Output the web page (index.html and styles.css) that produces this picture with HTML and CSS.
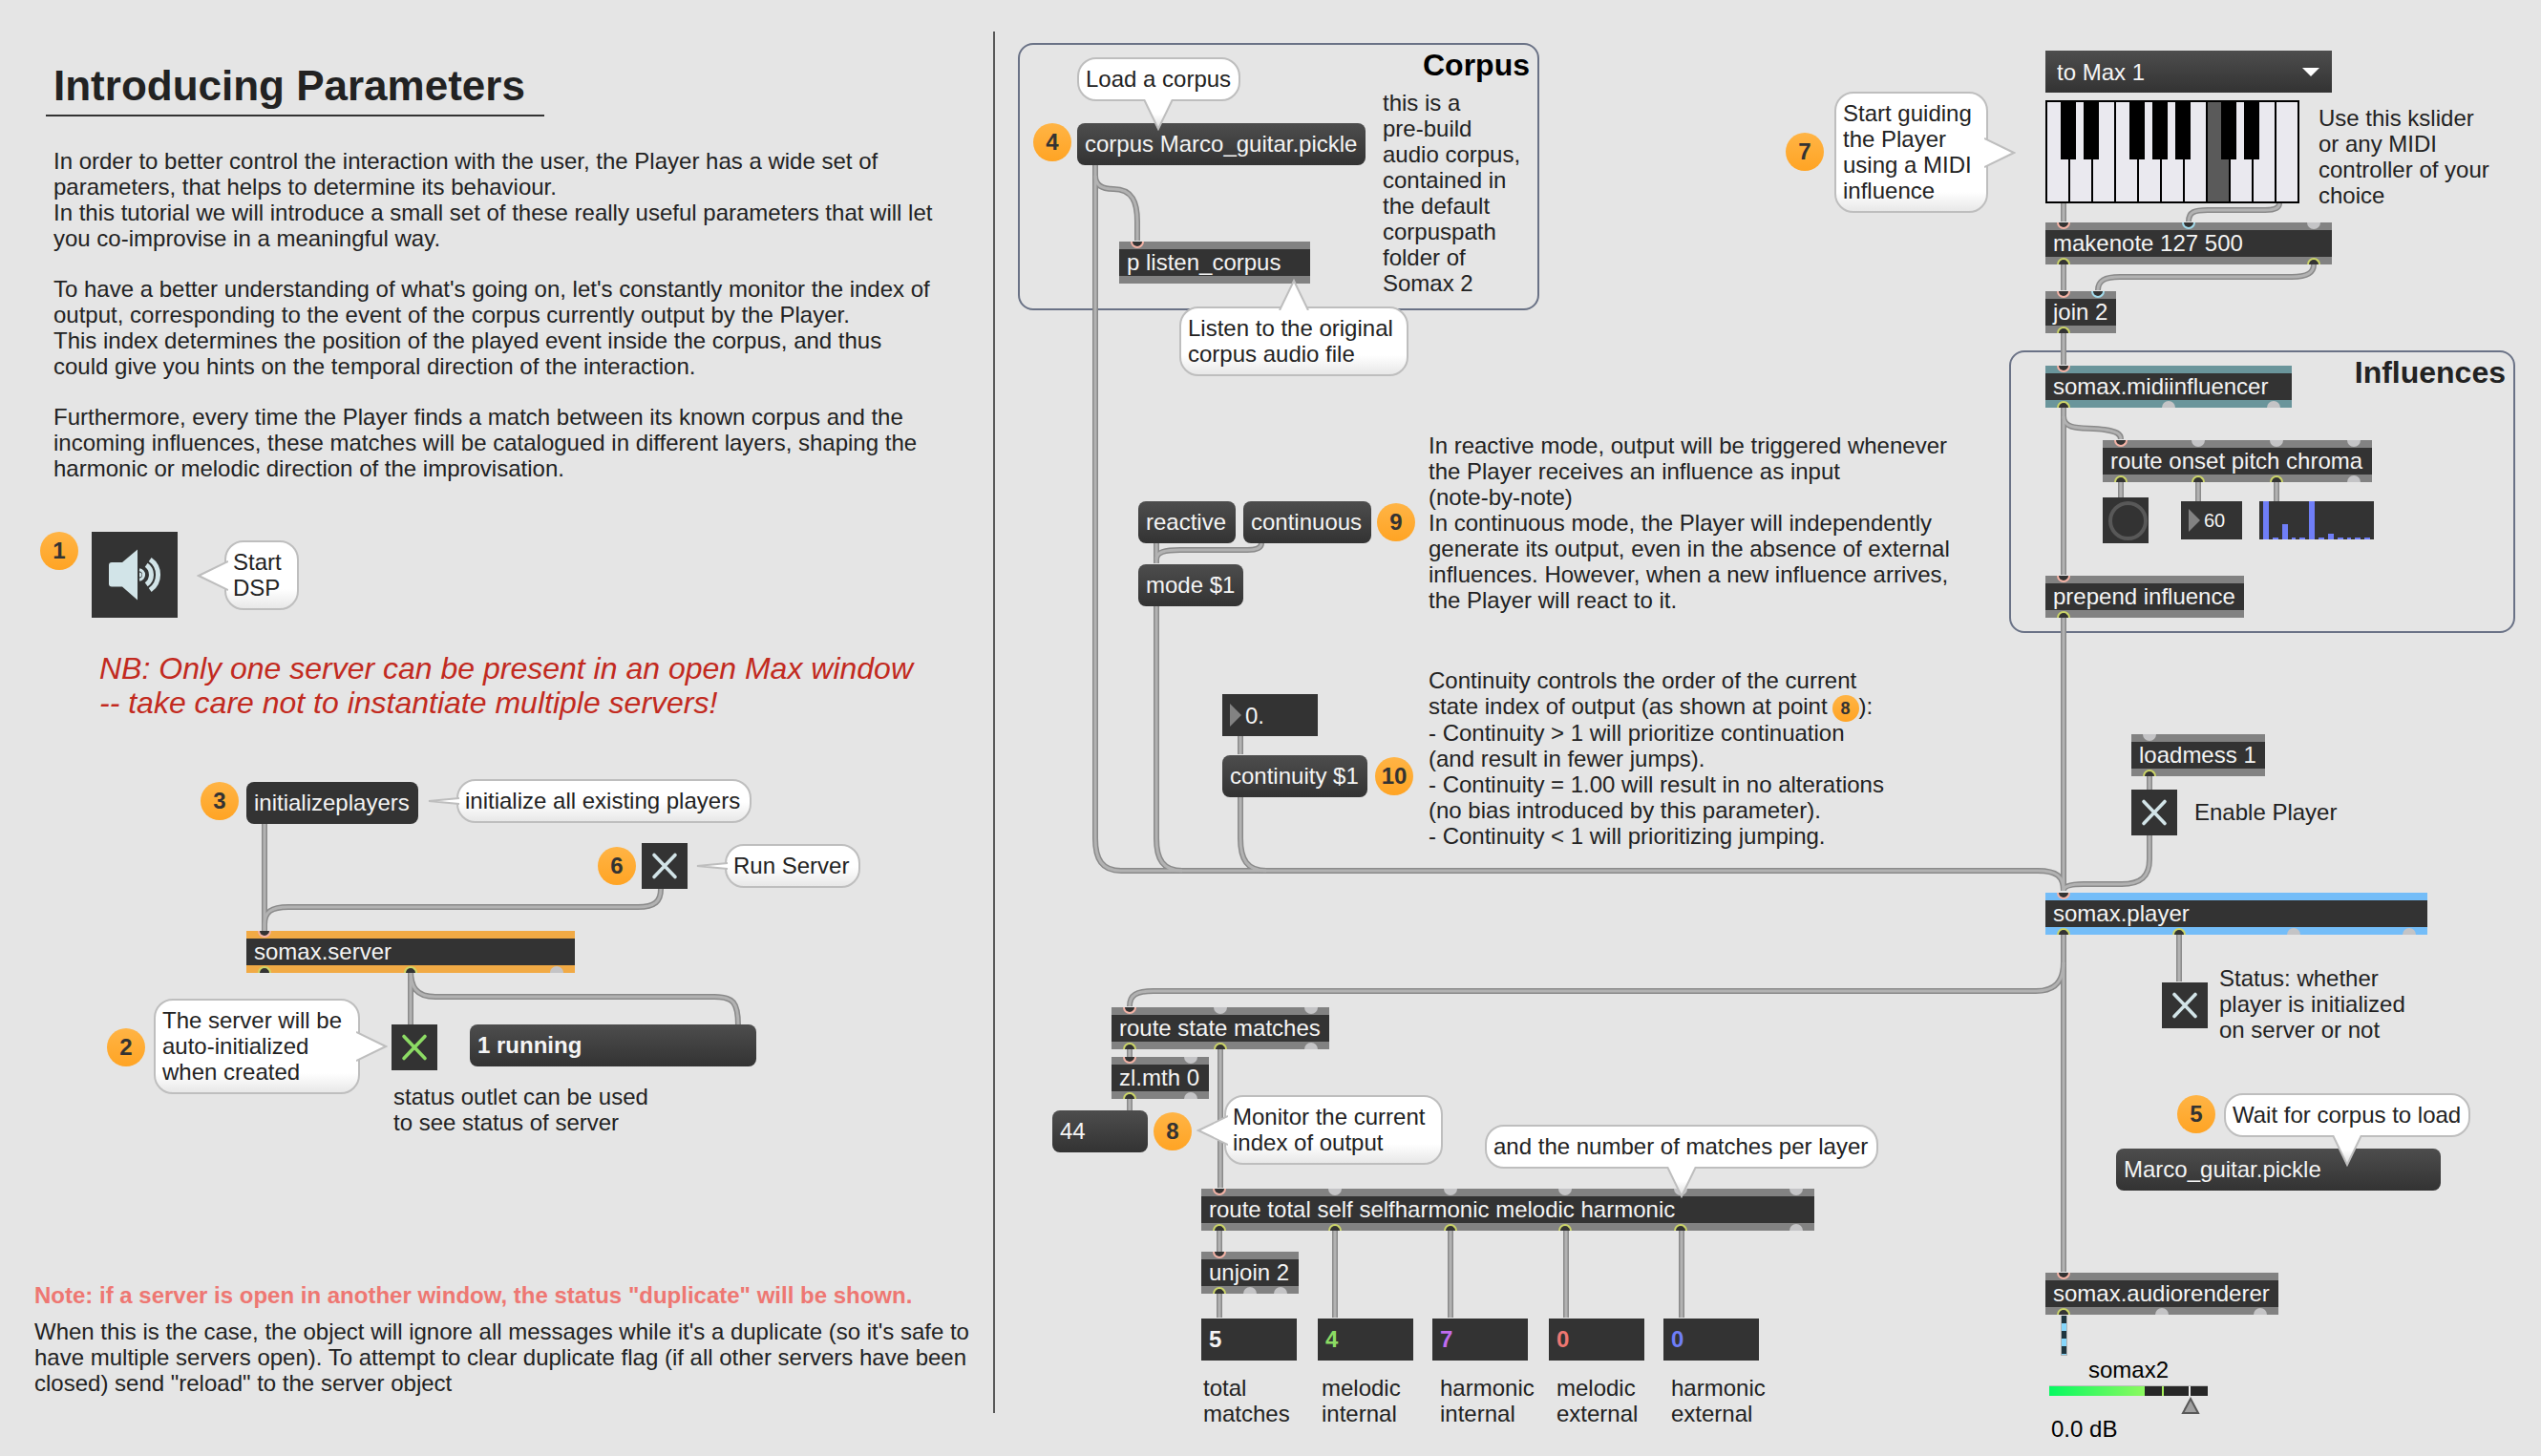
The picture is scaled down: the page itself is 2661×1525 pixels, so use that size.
FILE: index.html
```html
<!DOCTYPE html>
<html lang="en">
<head>
<meta charset="utf-8">
<title>Introducing Parameters</title>
<link rel="stylesheet" href="styles.css">
</head>
<body>
<svg class="defs" width="0" height="0" aria-hidden="true">
  <defs>
    <linearGradient id="tail-shade" x1="0" y1="0" x2="0" y2="1"><stop offset="0.5" stop-color="#fff"/><stop offset="1" stop-color="#dcdcdc"/></linearGradient>
    <symbol id="cross" viewBox="0 0 48 48"><path d="M13 12.5 35 35.5M35 12.5 13 35.5" fill="none" stroke="currentColor" stroke-width="3.6" stroke-linecap="round"/></symbol>
    <symbol id="arrow" viewBox="0 0 12 24"><path d="M0 0 12 12 0 24Z" fill="#828282"/></symbol>
    <symbol id="tail-left" viewBox="0 0 33 32"><path d="M33 1 2 16 33 31" fill="#fff" stroke="#bebebe" stroke-width="2"/></symbol>
    <symbol id="tail-right" viewBox="0 0 33 32"><path d="M0 1 31 16 0 31" fill="#fff" stroke="#bebebe" stroke-width="2"/></symbol>
    <symbol id="tail-down" viewBox="0 0 32 33"><path d="M1 0 16 31 31 0" fill="url(#tail-shade)" stroke="#bebebe" stroke-width="2"/></symbol>
    <symbol id="tail-up" viewBox="0 0 32 33"><path d="M1 33 16 2 31 33" fill="#fff" stroke="#bebebe" stroke-width="2"/></symbol>
    <symbol id="tail-thin" viewBox="0 0 33 8"><path d="M33 1 1 4 33 7" fill="#fff" stroke="#bebebe" stroke-width="2"/></symbol>
  </defs>
</svg>

<main class="patcher">
  <section class="guide">
    <header><h1>Introducing Parameters</h1></header>
    <div class="intro">
      <p>In order to better control the interaction with the user, the Player has a wide set of<br>parameters, that helps to determine its behaviour.<br>In this tutorial we will introduce a small set of these really useful parameters that will let<br>you co-improvise in a meaningful way.</p>
      <p>To have a better understanding of what's going on, let's constantly monitor the index of<br>output, corresponding to the event of the corpus currently output by the Player.<br>This index determines the position of the played event inside the corpus, and thus<br>could give you hints on the temporal direction of the interaction.</p>
      <p>Furthermore, every time the Player finds a match between its known corpus and the<br>incoming influences, these matches will be catalogued in different layers, shaping the<br>harmonic or melodic direction of the improvisation.</p>
    </div>

    <div class="canvas canvas-server">
      <svg class="wires" width="1040" height="839" viewBox="0 504 1040 839" aria-hidden="true">
        <g id="server-wires">
          <path d="M277 863V980"/>
          <path d="M692 931C692 944 686 950 668 950H302C284 950 277 955 277 968V980"/>
          <path d="M430 1016V1074"/>
          <path d="M430 1016C430 1034 436 1044 456 1044H748C768 1044 773 1050 773 1074"/>
        </g>
        <use class="wire-core" href="#server-wires"/>
      </svg>

      <span class="badge b1">1</span>
      <button class="dsp" type="button" aria-label="Start DSP">
        <svg width="90" height="90" viewBox="0 0 90 90">
          <path d="M21 32H32L48 18.5V71.5L32 57.5H21Q18 57.5 18 54.5V35Q18 32 21 32Z" fill="#d2e4e8"/>
          <g fill="none" stroke="#d2e4e8">
            <path d="M61.2 29A19.5 19.5 0 0 1 61.2 61" stroke-width="5"/>
            <path d="M57.2 34.8A12.5 12.5 0 0 1 57.2 55.2" stroke-width="5"/>
            <path d="M50 39.8A5.3 5.3 0 0 1 50 50.3" stroke-width="3"/>
          </g>
          <path d="M50 42.5A2.5 2.5 0 0 1 50 47.5Z" fill="#d2e4e8"/>
        </svg>
      </button>
      <div class="bubble bub-dsp">Start<br>DSP<svg class="tail tl"><use href="#tail-left"/></svg></div>

      <p class="warning">NB: Only one server can be present in an open Max window<br>-- take care not to instantiate multiple servers!</p>

      <span class="badge b3">3</span>
      <button type="button" class="message pressed m-init">initializeplayers</button>
      <div class="bubble bub-init">initialize all existing players<svg class="tail tt"><use href="#tail-thin"/></svg></div>

      <span class="badge b6">6</span>
      <label class="toggle t-run"><input type="checkbox" checked aria-label="Run Server"><svg><use href="#cross"/></svg></label>
      <div class="bubble bub-run">Run Server<svg class="tail tt"><use href="#tail-thin"/></svg></div>

      <div class="obj orange o-server">
        <div class="ports in"><i class="on"></i></div>
        <div class="name">somax.server</div>
        <div class="ports out"><i class="on"></i><i class="on"></i><i></i></div>
      </div>

      <span class="badge b2">2</span>
      <div class="bubble bub-auto">The server will be<br>auto-initialized<br>when created<svg class="tail tr"><use href="#tail-right"/></svg></div>
      <label class="toggle green t-server"><input type="checkbox" checked aria-label="Server status"><svg><use href="#cross"/></svg></label>
      <button type="button" class="message strong m-running">1 running</button>
      <p class="comment c-status">status outlet can be used<br>to see status of server</p>
    </div>

    <footer>
      <p class="note">Note: if a server is open in another window, the status "duplicate" will be shown.</p>
      <p>When this is the case, the object will ignore all messages while it's a duplicate (so it's safe to<br>have multiple servers open). To attempt to clear duplicate flag (if all other servers have been<br>closed) send "reload" to the server object</p>
    </footer>
  </section>

  <section class="canvas canvas-player">
    <section class="panel p-corpus">
      <h2 class="black">Corpus</h2>
      <p>this is a<br>pre-build<br>audio corpus,<br>contained in<br>the default<br>corpuspath<br>folder of<br>Somax 2</p>
    </section>
    <section class="panel p-influences"><h2>Influences</h2></section>

    <svg class="wires" width="1619" height="1525" viewBox="1042 0 1619 1525" aria-hidden="true">
      <g id="player-wires">
        <path d="M1147 173V878C1147 900 1154 912 1174 912H2134C2154 912 2161 918 2161 933"/>
        <path d="M1147 184C1147 194 1154 198 1166 198C1186 198 1191 212 1191 232V252"/>
        <path d="M1211 569V590"/>
        <path d="M1321 569C1321 574 1316 576 1306 576H1236C1220 576 1211 578 1211 586"/>
        <path d="M1211 635V878C1211 900 1218 912 1238 912"/>
        <path d="M1299 771V790"/>
        <path d="M1299 835V878C1299 900 1306 912 1326 912"/>
        <path d="M2161 213V232"/>
        <path d="M2387 213C2387 218 2382 220 2372 220H2312C2298 220 2292 222 2292 232"/>
        <path d="M2161 277V304"/>
        <path d="M2423 277C2423 286 2416 290 2400 290H2220C2204 290 2197 294 2197 304"/>
        <path d="M2161 349V382"/>
        <path d="M2161 427V602"/>
        <path d="M2161 436C2161 452 2184 447 2204 450C2216 452 2221 454 2221 460"/>
        <path d="M2221 505V521M2302 505V525M2384 505V525"/>
        <path d="M2161 647V933"/>
        <path d="M2251 813V827"/>
        <path d="M2251 875V900C2251 918 2242 926 2222 926H2182C2168 926 2161 928 2161 933"/>
        <path d="M2161 979V1332"/>
        <path d="M2161 1008C2161 1028 2152 1038 2132 1038H1208C1190 1038 1183 1042 1183 1054"/>
        <path d="M2282 979V1028"/>
        <path d="M1183 1099V1107M1183 1151V1163M1278 1099V1244"/>
        <path d="M1277 1289V1311M1277 1355V1380"/>
        <path d="M1398 1289V1380M1519 1289V1380M1640 1289V1380M1761 1289V1380"/>
      </g>
      <use class="wire-core" href="#player-wires"/>
      <path class="signal-edge" d="M2161.5 1378V1420"/>
      <path class="signal" d="M2161.5 1378V1419"/>
      <path class="signal-dash" d="M2161.5 1386V1419"/>
    </svg>

    <span class="badge b4">4</span>
    <button type="button" class="message m-corpus">corpus Marco_guitar.pickle</button>
    <div class="bubble plain bub-load">Load a corpus<svg class="tail td"><use href="#tail-down"/></svg></div>
    <div class="obj o-listen">
      <div class="ports in"><i class="on"></i></div>
      <div class="name">p listen_corpus</div>
      <div class="ports out"></div>
    </div>
    <div class="bubble bub-listen">Listen to the original<br>corpus audio file<svg class="tail tu"><use href="#tail-up"/></svg></div>

    <button type="button" class="message m-reactive">reactive</button>
    <button type="button" class="message m-continuous">continuous</button>
    <span class="badge b9">9</span>
    <button type="button" class="message m-mode">mode $1</button>
    <p class="comment c-mode">In reactive mode, output will be triggered whenever<br>the Player receives an influence as input<br>(note-by-note)<br>In continuous mode, the Player will independently<br>generate its output, even in the absence of external<br>influences. However, when a new influence arrives,<br>the Player will react to it.</p>

    <div class="number n-continuity"><svg><use href="#arrow"/></svg><input type="text" value="0." aria-label="Continuity"></div>
    <button type="button" class="message m-continuity">continuity $1</button>
    <span class="badge b10">10</span>
    <p class="comment c-continuity">Continuity controls the order of the current<br>state index of output (as shown at point<span class="badge small">8</span>):<br>- Continuity &gt; 1 will prioritize continuation<br>(and result in fewer jumps).<br>- Continuity = 1.00 will result in no alterations<br>(no bias introduced by this parameter).<br>- Continuity &lt; 1 will prioritizing jumping.</p>

    <span class="badge b7">7</span>
    <div class="bubble bub-guide">Start guiding<br>the Player<br>using a MIDI<br>influence<svg class="tail tr"><use href="#tail-right"/></svg></div>
    <div class="menu">
      <select aria-label="MIDI source"><option>to Max 1</option></select>
      <svg width="18" height="9" viewBox="0 0 18 9"><path d="M0 0H18L9 9Z" fill="#fff"/></svg>
    </div>
    <svg class="keyboard" width="266" height="108" viewBox="0 0 266 108" role="img" aria-label="Keyboard">
      <path d="M0 0H266V108H0Z" fill="#000"/>
      <path d="M2 2h22v104h-22zM26 2h22v104h-22zM50 2h22v104h-22zM74 2h22v104h-22zM98 2h22v104h-22zM122 2h22v104h-22zM146 2h22v104h-22zM194 2h22v104h-22zM218 2h22v104h-22zM242 2h22v104h-22z" fill="#eae9ef"/>
      <path d="M170 2h22v104h-22z" fill="#5a5a5a"/>
      <path d="M16 0h16v62h-16zM40 0h16v62h-16zM88 0h16v62h-16zM112 0h16v62h-16zM136 0h16v62h-16zM184 0h16v62h-16zM208 0h16v62h-16z" fill="#000"/>
    </svg>
    <p class="comment c-kslider">Use this kslider<br>or any MIDI<br>controller of your<br>choice</p>

    <div class="obj o-makenote">
      <div class="ports in"><i class="on"></i><i class="on cool"></i><i></i></div>
      <div class="name">makenote 127 500</div>
      <div class="ports out"><i class="on"></i><i class="on"></i></div>
    </div>
    <div class="obj o-join">
      <div class="ports in"><i class="on"></i><i class="on cool"></i></div>
      <div class="name">join 2</div>
      <div class="ports out"><i class="on"></i></div>
    </div>
    <div class="obj teal o-midi">
      <div class="ports in"><i class="on"></i></div>
      <div class="name">somax.midiinfluencer</div>
      <div class="ports out"><i class="on"></i><i></i><i></i></div>
    </div>
    <div class="obj o-onset">
      <div class="ports in"><i class="on"></i><i></i><i></i><i></i></div>
      <div class="name">route onset pitch chroma</div>
      <div class="ports out"><i class="on"></i><i class="on"></i><i class="on"></i><i></i></div>
    </div>
    <button type="button" class="bang" aria-label="Onset"></button>
    <div class="number compact n-pitch"><svg><use href="#arrow"/></svg><input type="text" value="60" aria-label="Pitch"></div>
    <svg class="chroma" width="120" height="40" viewBox="0 0 120 40" role="img" aria-label="Chroma">
      <path d="M0 0H120V40H0Z" fill="#333"/>
      <path d="M4 0h6v40h-6zM14 38h6v2h-6zM24 24h6v16h-6zM34 38h4v2h-4zM42 38h6v2h-6zM52 0h6v40h-6zM62 38h6v2h-6zM72 34h6v6h-6zM82 38h6v2h-6zM92 38h4v2h-4zM100 38h6v2h-6zM110 38h6v2h-6z" fill="#6f7ef7"/>
    </svg>
    <div class="obj o-prepend">
      <div class="ports in"><i class="on"></i></div>
      <div class="name">prepend influence</div>
      <div class="ports out"><i class="on"></i></div>
    </div>

    <div class="obj o-loadmess">
      <div class="ports in"><i></i></div>
      <div class="name">loadmess 1</div>
      <div class="ports out"><i class="on"></i></div>
    </div>
    <label class="toggle t-enable"><input type="checkbox" checked aria-labelledby="enable-text"><svg><use href="#cross"/></svg></label>
    <p class="comment c-enable" id="enable-text">Enable Player</p>
    <div class="obj blue o-player">
      <div class="ports in"><i class="on"></i></div>
      <div class="name">somax.player</div>
      <div class="ports out"><i class="on"></i><i class="on"></i><i></i><i></i></div>
    </div>
    <label class="toggle t-player"><input type="checkbox" checked aria-labelledby="player-text"><svg><use href="#cross"/></svg></label>
    <p class="comment c-player" id="player-text">Status: whether<br>player is initialized<br>on server or not</p>

    <span class="badge b5">5</span>
    <button type="button" class="message m-loaded">Marco_guitar.pickle</button>
    <div class="bubble plain bub-wait">Wait for corpus to load<svg class="tail td"><use href="#tail-down"/></svg></div>

    <div class="obj o-state">
      <div class="ports in"><i class="on"></i><i></i><i></i></div>
      <div class="name">route state matches</div>
      <div class="ports out"><i class="on"></i><i class="on"></i><i></i></div>
    </div>
    <div class="obj o-zl">
      <div class="ports in"><i class="on"></i><i></i></div>
      <div class="name">zl.mth 0</div>
      <div class="ports out"><i class="on"></i><i></i></div>
    </div>
    <button type="button" class="message m-index">44</button>
    <span class="badge b8">8</span>
    <div class="bubble bub-monitor">Monitor the current<br>index of output<svg class="tail tl"><use href="#tail-left"/></svg></div>

    <div class="obj o-total">
      <div class="ports in"><i class="on"></i><i></i><i></i><i></i><i></i><i></i></div>
      <div class="name">route total self selfharmonic melodic harmonic</div>
      <div class="ports out"><i class="on"></i><i class="on"></i><i class="on"></i><i class="on"></i><i class="on"></i><i></i></div>
    </div>
    <div class="bubble plain bub-layer">and the number of matches per layer<svg class="tail td"><use href="#tail-down"/></svg></div>
    <div class="obj o-unjoin">
      <div class="ports in"><i class="on"></i></div>
      <div class="name">unjoin 2</div>
      <div class="ports out"><i class="on"></i><i></i><i></i></div>
    </div>

    <div class="match k-total"><input type="text" id="total" value="5"><label for="total">total<br>matches</label></div>
    <div class="match k-mi"><input type="text" id="mi" value="4"><label for="mi">melodic<br>internal</label></div>
    <div class="match k-hi"><input type="text" id="hi" value="7"><label for="hi">harmonic<br>internal</label></div>
    <div class="match k-me"><input type="text" id="me" value="0"><label for="me">melodic<br>external</label></div>
    <div class="match k-he"><input type="text" id="he" value="0"><label for="he">harmonic<br>external</label></div>

    <div class="obj o-audio">
      <div class="ports in"><i class="on"></i></div>
      <div class="name">somax.audiorenderer</div>
      <div class="ports out"><i class="on"></i><i></i><i></i></div>
    </div>
    <div class="gain">
      <span class="gain-name">somax2</span>
      <svg width="166" height="32" viewBox="0 0 166 32" role="img" aria-label="Level">
        <defs><linearGradient id="level"><stop offset="0" stop-color="#06f961"/><stop offset="1" stop-color="#8cf95f"/></linearGradient></defs>
        <path d="M0 0H166V1H0Z" fill="#bdbdbd"/>
        <path d="M0 1H166V11H0Z" fill="#272727"/>
        <path d="M0 1H100V11H0Z" fill="url(#level)"/>
        <path d="M118 1h2v10h-2z" fill="#a6f05a"/>
        <path d="M146 1h2v10h-2z" fill="#eee"/>
        <path d="M148 14 156 29H140Z" fill="#a0a0a0" stroke="#585858" stroke-width="2"/>
      </svg>
      <span class="gain-value">0.0 dB</span>
    </div>
  </section>
</main>
</body>
</html>
```
FILE: styles.css
```css
* { box-sizing: border-box; }

body {
  margin: 0;
  background: #e5e5e5;
  color: #222;
  font: 24px/27px "Liberation Sans", Arial, sans-serif;
}

h1, h2, p { margin: 0; }

button, input, select {
  margin: 0;
  border: 0;
  border-radius: 0;
  font: inherit;
  color: #f4f4f4;
}

.defs { position: absolute; }

.patcher {
  display: grid;
  grid-template-columns: 1042px 1fr;
  align-items: start;
}

/* Left column: explanation and server set-up */

.guide {
  margin-top: 33px;
  padding: 32px 0 18px;
  border-right: 2px solid #585858;
}

h1 {
  width: fit-content;
  margin-left: 48px;
  padding: 0 20px 5px 8px;
  border-bottom: 2px solid #333;
  font-size: 44px;
  line-height: 50px;
}

.intro {
  display: flex;
  flex-direction: column;
  gap: 26px;
  margin: 33px 0 0 56px;
}

.intro p, footer p, .comment { white-space: nowrap; }

footer {
  display: flex;
  flex-direction: column;
  gap: 11px;
  padding-left: 36px;
}

.note { color: #ee7772; font-weight: bold; }

/* Patch canvases */

.canvas { position: relative; }
.canvas-server { height: 839px; }
.canvas-player { height: 1525px; }
.canvas > * { position: absolute; }

.wires {
  left: 0;
  top: 0;
  fill: none;
  stroke: #8a8a8a;
  stroke-width: 6px;
}
.wire-core { stroke: #b2b2b2; stroke-width: 3px; }
.signal-edge { stroke: #b0b0b0; stroke-width: 7px; }
.signal { stroke: #1f3640; stroke-width: 5px; }
.signal-dash { stroke: #86d6fb; stroke-width: 5px; stroke-dasharray: 8px; }

.warning {
  left: 104px;
  top: 178px;
  color: #c22a20;
  font-size: 32px;
  font-style: italic;
  line-height: 36px;
  white-space: nowrap;
}

.panel {
  border: 2px solid #6a7286;
  border-radius: 16px;
  padding: 3px 8px;
}
.panel h2 { font-size: 32px; line-height: 36px; text-align: right; }
.panel .black { color: #000; }
.panel p { width: 154px; margin: 8px 0 0 auto; }

.badge {
  width: 40px;
  height: 40px;
  border-radius: 50%;
  background: linear-gradient(#ffb445, #ffa424);
  color: #333;
  font-weight: bold;
  line-height: 40px;
  text-align: center;
}
.badge.small {
  display: inline-block;
  width: 28px;
  height: 28px;
  margin: -2px 0 -2px 5px;
  font-size: 18px;
  line-height: 28px;
  vertical-align: middle;
}

.message {
  height: 44px;
  padding: 0 8px;
  border-radius: 8px;
  background: linear-gradient(#4d4d4d, #333);
  line-height: 44px;
  text-align: left;
  white-space: nowrap;
}
.message.pressed { background: #333; }
.message.strong { font-weight: bold; }

.obj { background: #333; color: #f4f4f4; --rim: #828282; }
.obj.orange { --rim: #f1aa45; }
.obj.teal { --rim: #6a959b; }
.obj.blue { --rim: #74bdf8; }
.name { height: 28px; padding-left: 8px; line-height: 28px; white-space: nowrap; }
.ports {
  display: flex;
  justify-content: space-between;
  height: 8px;
  padding: 0 12px;
  background: var(--rim);
}
.ports i {
  width: 14px;
  height: 7px;
  border: 0 solid #f4b3a6;
  border-radius: 0 0 7px 7px;
  background: #c4c4c6;
}
.ports .on { border-width: 0 2px 2px; background: #333; }
.ports .cool { border-color: #a3dcec; }
.out { align-items: flex-end; }
.out i { border-color: #ccd568; border-radius: 7px 7px 0 0; }
.out .on { border-width: 2px 2px 0; }

.toggle {
  width: 48px;
  height: 48px;
  background: #333;
  color: #d2e4e8;
}
.toggle.green { color: #8cdb64; }
.toggle input { position: absolute; width: 48px; height: 48px; opacity: 0; }
.toggle svg { display: block; width: 48px; height: 48px; }

.dsp { width: 90px; height: 90px; padding: 0; background: #333; }
.dsp svg { display: block; }

.bang { width: 48px; height: 48px; background: #333; display: grid; place-items: center; }
.bang::before {
  content: "";
  width: 33px;
  height: 33px;
  border: 4px solid #585858;
  border-radius: 50%;
}

.number {
  display: flex;
  align-items: center;
  gap: 4px;
  height: 44px;
  padding-left: 8px;
  background: #333;
}
.number svg { flex: none; width: 12px; height: 24px; }
.number input { width: 100%; min-width: 0; padding: 0; background: none; }
.number.compact { height: 40px; font-size: 20px; }

.bubble {
  padding: 7px 7px 8px;
  border: 2px solid #bebebe;
  border-radius: 20px;
  background: linear-gradient(#fff calc(100% - 20px), #e8e8e8);
  white-space: nowrap;
}
.bubble.plain { background: #fff; }
.tail { position: absolute; }
.tl { left: -31px; top: calc(50% - 16px); width: 33px; height: 32px; }
.tr { right: -31px; top: calc(50% - 16px); width: 33px; height: 32px; }
.tt { left: -33px; top: calc(50% - 4px); width: 35px; height: 8px; }
.td { bottom: -33px; width: 32px; height: 33px; }
.tu { top: -31px; width: 32px; height: 33px; }

.menu { width: 300px; height: 44px; }
.menu select {
  appearance: none;
  width: 100%;
  height: 100%;
  padding: 0 12px;
  background: linear-gradient(#4d4d4d, #333);
}
.menu svg { position: absolute; right: 13px; top: 18px; pointer-events: none; }

.match { display: flex; flex-direction: column; gap: 15px; width: 100px; }
.match input { width: 100%; height: 44px; padding: 0 8px; background: #333; font-weight: bold; }
.match label { padding-left: 8px; }

.gain { display: flex; flex-direction: column; color: #000; }
.gain-name { padding: 0 0 3px 41px; }
.gain-value { padding-left: 2px; }
.gain svg { display: block; }

/* Positions on the server canvas */

.b1 { left: 42px; top: 53px; }
.dsp { left: 96px; top: 53px; }
.bub-dsp { left: 235px; top: 62px; width: 78px; }
.b3 { left: 210px; top: 315px; }
.m-init { left: 258px; top: 315px; width: 180px; }
.bub-init { left: 478px; top: 312px; width: 309px; }
.b6 { left: 626px; top: 383px; }
.t-run { left: 672px; top: 379px; }
.bub-run { left: 759px; top: 380px; width: 142px; }
.o-server { left: 258px; top: 471px; width: 344px; }
.b2 { left: 112px; top: 573px; }
.bub-auto { left: 161px; top: 542px; width: 216px; }
.t-server { left: 410px; top: 569px; }
.m-running { left: 492px; top: 569px; width: 300px; }
.c-status { left: 412px; top: 631px; }

/* Positions on the player canvas */

.p-corpus { left: 24px; top: 45px; width: 546px; height: 280px; }
.b4 { left: 40px; top: 129px; }
.m-corpus { left: 86px; top: 129px; width: 302px; }
.bub-load { left: 86px; top: 60px; width: 171px; }
.bub-load .tail { left: 67px; }
.o-listen { left: 130px; top: 253px; width: 200px; }
.bub-listen { left: 193px; top: 321px; width: 240px; }
.bub-listen .tail { left: 102px; }

.m-reactive { left: 150px; top: 525px; width: 102px; }
.m-continuous { left: 260px; top: 525px; width: 134px; }
.b9 { left: 400px; top: 527px; }
.m-mode { left: 150px; top: 591px; width: 110px; }
.c-mode { left: 454px; top: 453px; }
.n-continuity { left: 238px; top: 727px; width: 100px; }
.m-continuity { left: 238px; top: 791px; width: 152px; }
.b10 { left: 398px; top: 793px; }
.c-continuity { left: 454px; top: 699px; }

.b7 { left: 828px; top: 139px; }
.bub-guide { left: 879px; top: 96px; width: 161px; }
.menu { left: 1100px; top: 53px; }
.keyboard { left: 1100px; top: 105px; }
.c-kslider { left: 1386px; top: 110px; }
.o-makenote { left: 1100px; top: 233px; width: 300px; }
.o-join { left: 1100px; top: 305px; width: 74px; }

.p-influences { left: 1062px; top: 367px; width: 530px; height: 296px; }
.o-midi { left: 1100px; top: 383px; width: 258px; }
.o-onset { left: 1160px; top: 461px; width: 282px; }
.bang { left: 1160px; top: 521px; }
.n-pitch { left: 1242px; top: 525px; width: 64px; }
.chroma { left: 1324px; top: 525px; }
.o-prepend { left: 1100px; top: 603px; width: 208px; }

.o-loadmess { left: 1190px; top: 769px; width: 140px; }
.t-enable { left: 1190px; top: 827px; }
.c-enable { left: 1256px; top: 837px; }
.o-player { left: 1100px; top: 935px; width: 400px; }
.t-player { left: 1222px; top: 1029px; }
.c-player { left: 1282px; top: 1011px; }
.b5 { left: 1238px; top: 1147px; }
.bub-wait { left: 1287px; top: 1145px; width: 258px; }
.bub-wait .tail { left: 111px; }
.m-loaded { left: 1174px; top: 1203px; width: 340px; }

.o-state { left: 122px; top: 1055px; width: 228px; }
.o-zl { left: 122px; top: 1107px; width: 102px; }
.m-index { left: 60px; top: 1163px; width: 100px; }
.b8 { left: 166px; top: 1165px; }
.bub-monitor { left: 240px; top: 1147px; width: 229px; }
.o-total { left: 216px; top: 1245px; width: 642px; }
.bub-layer { left: 513px; top: 1178px; width: 412px; }
.bub-layer .tail { left: 188px; }
.o-unjoin { left: 216px; top: 1311px; width: 102px; }

.k-total { left: 216px; top: 1381px; }
.k-total label { padding-left: 2px; }
.k-mi { left: 338px; top: 1381px; }
.k-mi label { padding-left: 4px; }
.k-mi input { color: #8cdb64; }
.k-hi { left: 458px; top: 1381px; }
.k-hi input { color: #c06cf0; }
.k-me { left: 580px; top: 1381px; }
.k-me input { color: #ee7772; }
.k-he { left: 700px; top: 1381px; }
.k-he input { color: #6f7ef7; }

.o-audio { left: 1100px; top: 1333px; width: 244px; }
.gain { left: 1104px; top: 1421px; }
```
